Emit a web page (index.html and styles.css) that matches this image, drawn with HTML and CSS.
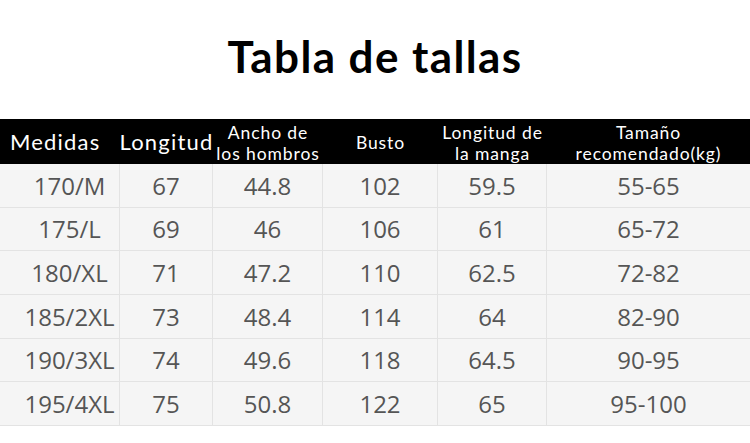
FILE: index.html
```html
<!DOCTYPE html>
<html lang="es">
<head>
<meta charset="utf-8">
<link rel="stylesheet" href="styles.css">
</head>
<body>
<h1 class="title">Tabla de tallas</h1>
<div class="table">
  <div class="hd first">Medidas</div>
  <div class="hd">Longitud</div>
  <div class="hd small">Ancho de<br>los hombros</div>
  <div class="hd small">Busto</div>
  <div class="hd small">Longitud de<br>la manga</div>
  <div class="hd small">Tamaño<br>recomendado(kg)</div>

  <div class="c first">170/M</div><div class="c">67</div><div class="c">44.8</div><div class="c">102</div><div class="c">59.5</div><div class="c">55-65</div>
  <div class="c first">175/L</div><div class="c">69</div><div class="c">46</div><div class="c">106</div><div class="c">61</div><div class="c">65-72</div>
  <div class="c first">180/XL</div><div class="c">71</div><div class="c">47.2</div><div class="c">110</div><div class="c">62.5</div><div class="c">72-82</div>
  <div class="c first">185/2XL</div><div class="c">73</div><div class="c">48.4</div><div class="c">114</div><div class="c">64</div><div class="c">82-90</div>
  <div class="c first">190/3XL</div><div class="c">74</div><div class="c">49.6</div><div class="c">118</div><div class="c">64.5</div><div class="c">90-95</div>
  <div class="c first">195/4XL</div><div class="c">75</div><div class="c">50.8</div><div class="c">122</div><div class="c">65</div><div class="c">95-100</div>
</div>
</body>
</html>
```
FILE: styles.css
```css
html, body {
  margin: 0;
  padding: 0;
  background: #fff;
  width: 750px;
  height: 443px;
  overflow: hidden;
}
.title {
  margin: 0;
  padding-top: 30px;
  height: 119px;
  box-sizing: border-box;
  text-align: center;
  font-family: "Lato", sans-serif;
  font-weight: 700;
  font-size: 44px;
  line-height: 52px;
  color: #000;
  letter-spacing: 1.4px;
}
.table {
  display: grid;
  grid-template-columns: 120px 93px 110px 115px 109px 203px;
  grid-template-rows: 45px repeat(6, 43.67px);
}
.hd {
  background: #000;
  color: #fff;
  font-family: "Lato", sans-serif;
  font-size: 22px;
  letter-spacing: 1.2px;
  line-height: 27px;
  display: flex;
  align-items: center;
  justify-content: center;
  text-align: center;
  white-space: nowrap;
}
.hd.small {
  font-size: 17.5px;
  letter-spacing: 0.9px;
  line-height: 21px;
  padding-top: 2px;
}
.hd.first {
  justify-content: flex-start;
  padding-left: 10px;
}
.c {
  background: #f5f5f5;
  color: #555;
  font-family: "Open Sans", sans-serif;
  font-size: 24px;
  display: flex;
  align-items: center;
  justify-content: center;
  border-right: 1px solid #e3e3e3;
  border-bottom: 1px solid #e3e3e3;
  box-sizing: border-box;
}
.c:nth-child(6n) {
  border-right: none;
}
.c.first {
  padding-left: 20px;
}
```
